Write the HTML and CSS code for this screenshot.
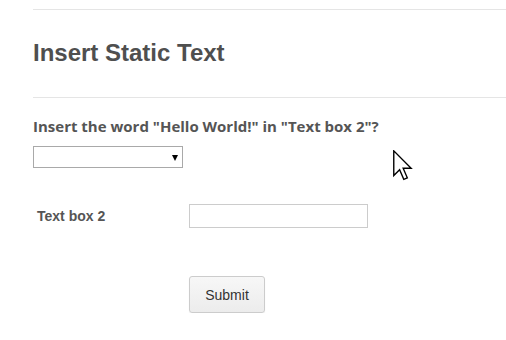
FILE: index.html
```html
<!DOCTYPE html>
<html lang="en">
<head>
    <meta charset="UTF-8">
    <title>Insert Static Text</title>
    <link rel="stylesheet" href="styles.css">
</head>
<body>
<div class="page">
    <div class="rule"></div>
    <h1>Insert Static Text</h1>
    <div class="rule"></div>
    <form class="task">
        <label class="question">Insert the word "Hello World!" in "Text box 2"?</label>
        <div class="pick">
            <select class="choice"><option></option></select>
            <span class="caret"></span>
        </div>
        <div class="row">
            <label class="field-name">Text box 2</label>
            <input type="text" class="field">
        </div>
        <div class="actions">
            <button type="button" class="btn">Submit</button>
        </div>
    </form>
</div>
<svg class="pointer" width="20" height="31" viewBox="0 0 13 20">
    <path d="M0.5 0.5 L0.5 16.5 L4.3 12.8 L7 19 L9.3 18 L6.6 11.8 L11.8 11.8 Z" fill="#fff" stroke="#000" stroke-width="0.9" stroke-linejoin="miter"/>
</svg>
</body>
</html>
```

FILE: styles.css
```css
*{margin: 0; padding: 0; box-sizing: border-box;}
body{
    background: #fff;
    font-family: "Liberation Sans", Arial, sans-serif;
    color: #555;
}
.page{
    padding: 9px 0 0 33px;
}
.rule{
    border-top: 1px solid #e5e5e5;
}
h1{
    font-size: 24px;
    line-height: 28px;
    font-weight: bold;
    color: #4f4f4f;
    padding: 29px 0 30px;
}
.question{
    display: block;
    margin-top: 18px;
    font-family: "Open Sans", "Liberation Sans", sans-serif;
    font-size: 15px;
    line-height: 20px;
    font-weight: bold;
    color: #555;
}
.pick{
    position: relative;
    width: 150px;
    margin-top: 10px;
}
.choice{
    display: block;
    width: 150px;
    height: 22px;
    border: 1px solid #a9a9a9;
    border-radius: 0;
    background: #fff;
    appearance: none;
    -webkit-appearance: none;
    outline: none;
}
.caret{
    position: absolute;
    left: 139px;
    top: 9px;
    width: 0;
    height: 0;
    border-left: 3px solid transparent;
    border-right: 3px solid transparent;
    border-top: 6px solid #000;
}
.row{
    display: flex;
    align-items: center;
    margin-top: 36px;
}
.field-name{
    width: 156px;
    padding-left: 4px;
    font-size: 14px;
    font-weight: bold;
    color: #555;
}
.field{
    width: 179px;
    height: 24px;
    border: 1px solid #ccc;
    outline: none;
}
.actions{
    margin: 48px 0 0 156px;
}
.btn{
    width: 76px;
    height: 37px;
    border: 1px solid #ccc;
    border-radius: 3px;
    background: linear-gradient(#f7f7f7, #ececec);
    font-family: "Liberation Sans", Arial, sans-serif;
    font-size: 14px;
    color: #333;
    box-shadow: 0 1px 1px rgba(0, 0, 0, 0.08);
}
.pointer{
    position: absolute;
    left: 393px;
    top: 150px;
}
```
